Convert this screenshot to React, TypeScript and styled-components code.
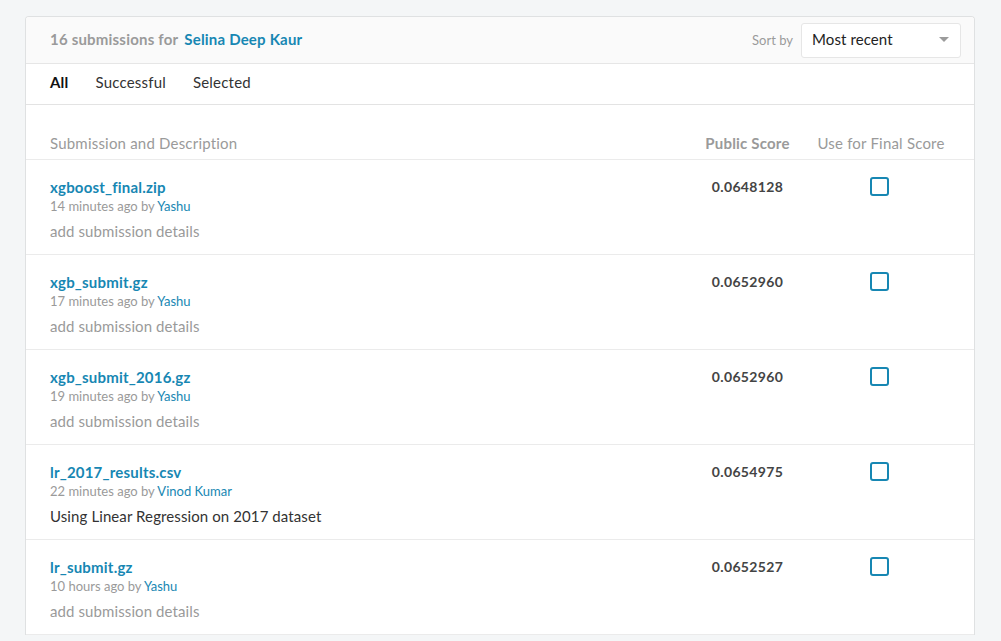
import React from "react";
import styled, { createGlobalStyle } from "styled-components";

const Global = createGlobalStyle`
  html, body { margin: 0; padding: 0; background: #f4f6f7; }
  body { font-family: "Lato", "Liberation Sans", sans-serif; -webkit-font-smoothing: antialiased; }
  #root { padding: 16px 0 0 25px; }
`;

const BLUE = "#1787b3";
const GRAY = "#9a9a9a";
const DARK = "#333";

const Card = styled.div`
  width: 948px;
  background: #fff;
  border: 1px solid #dfe1e2;
  border-bottom: none;
  border-radius: 4px 4px 0 0;
  overflow: hidden;
`;

const Header = styled.div`
  height: 46px;
  background: #fafafa;
  border-bottom: 1px solid #e6e6e6;
  display: flex;
  align-items: center;
  justify-content: space-between;
  padding: 0 13px 0 24px;
`;

const Title = styled.div`
  font-size: 15px;
  font-weight: 700;
  letter-spacing: 0.2px;
  color: ${GRAY};
  display: flex;
  gap: 6px;
  margin-top: -3px;
`;

const Strong = styled.span`
  color: ${BLUE};
  font-weight: 700;
`;

const Sort = styled.div`
  display: flex;
  align-items: center;
  gap: 8px;
`;

const SortLabel = styled.span`
  font-size: 13px;
  color: ${GRAY};
`;

const Select = styled.div`
  width: 160px;
  height: 35px;
  box-sizing: border-box;
  background: #fff;
  border: 1px solid #e6e6e6;
  border-radius: 3px;
  display: flex;
  align-items: center;
  justify-content: space-between;
  padding: 0 11px 2px 10px;
  font-size: 15px;
  letter-spacing: 0.1px;
  color: #222;
`;

const Caret = styled.span`
  width: 0;
  height: 0;
  border-left: 5px solid transparent;
  border-right: 5px solid transparent;
  border-top: 5px solid #9b9b9b;
`;

const Tabs = styled.div`
  height: 41px;
  border-bottom: 1px solid #e3e3e3;
  display: flex;
  align-items: center;
  gap: 27px;
  padding: 0 24px 4px;
  box-sizing: border-box;
`;

const Tab = styled.span<{ $active?: boolean }>`
  font-size: 15px;
  letter-spacing: 0.2px;
  color: ${(p) => (p.$active ? "#111" : DARK)};
  font-weight: ${(p) => (p.$active ? 700 : 400)};
`;

const Grid = styled.div`
  display: grid;
  grid-template-columns: 1fr 129px 138px;
  padding: 0 24px;
  border-bottom: 1px solid #ebebeb;
`;

const HeadRow = styled(Grid)`
  height: 55px;
  align-items: end;
  padding-bottom: 7px;
  box-sizing: border-box;
`;

const HeadCell = styled.div<{ $center?: boolean; $bold?: boolean }>`
  font-size: 15px;
  letter-spacing: 0.2px;
  color: ${GRAY};
  font-weight: ${(p) => (p.$bold ? 700 : 400)};
  text-align: ${(p) => (p.$center ? "center" : "left")};
`;

const Row = styled(Grid)`
  height: 95px;
  box-sizing: border-box;
  padding-top: 17px;
  align-items: start;
`;

const Info = styled.div`
  display: flex;
  flex-direction: column;
`;

const FileName = styled.a`
  font-size: 15px;
  font-weight: 700;
  letter-spacing: 0.2px;
  color: ${BLUE};
  text-decoration: none;
  line-height: 20px;
`;

const Meta = styled.div`
  font-size: 13px;
  color: ${GRAY};
  line-height: 18px;
`;

const Who = styled.span`
  color: ${BLUE};
`;

const Desc = styled.div<{ $empty?: boolean }>`
  font-size: 15px;
  letter-spacing: 0.1px;
  color: ${(p) => (p.$empty ? GRAY : DARK)};
  margin-top: 6px;
  line-height: 20px;
`;

const Score = styled.div`
  font-size: 14px;
  font-weight: 700;
  letter-spacing: 0.35px;
  color: #444;
  text-align: center;
  line-height: 20px;
`;

const CheckCell = styled.div`
  display: flex;
  justify-content: center;
  padding: 0 3px 0 0;
`;

const Check = styled.span`
  width: 19px;
  height: 19px;
  box-sizing: border-box;
  border: 2px solid ${BLUE};
  border-radius: 3px;
  background: #fff;
`;

const rows = [
  { file: "xgboost_final.zip", time: "14 minutes ago", by: "Yashu", desc: "", score: "0.0648128" },
  { file: "xgb_submit.gz", time: "17 minutes ago", by: "Yashu", desc: "", score: "0.0652960" },
  { file: "xgb_submit_2016.gz", time: "19 minutes ago", by: "Yashu", desc: "", score: "0.0652960" },
  { file: "lr_2017_results.csv", time: "22 minutes ago", by: "Vinod Kumar", desc: "Using Linear Regression on 2017 dataset", score: "0.0654975" },
  { file: "lr_submit.gz", time: "10 hours ago", by: "Yashu", desc: "", score: "0.0652527" },
];

export default function App() {
  return (
    <>
      <Global />
      <Card>
        <Header>
          <Title>
            <span>16 submissions for</span>
            <Strong>Selina Deep Kaur</Strong>
          </Title>
          <Sort>
            <SortLabel>Sort by</SortLabel>
            <Select>
              <span>Most recent</span>
              <Caret />
            </Select>
          </Sort>
        </Header>
        <Tabs>
          <Tab $active>All</Tab>
          <Tab>Successful</Tab>
          <Tab>Selected</Tab>
        </Tabs>
        <HeadRow>
          <HeadCell>Submission and Description</HeadCell>
          <HeadCell $center $bold>Public Score</HeadCell>
          <HeadCell $center>Use for Final Score</HeadCell>
        </HeadRow>
        {rows.map((r) => (
          <Row key={r.file}>
            <Info>
              <FileName href="#">{r.file}</FileName>
              <Meta>
                {r.time} by <Who>{r.by}</Who>
              </Meta>
              <Desc $empty={!r.desc}>{r.desc || "add submission details"}</Desc>
            </Info>
            <Score>{r.score}</Score>
            <CheckCell>
              <Check />
            </CheckCell>
          </Row>
        ))}
      </Card>
    </>
  );
}
